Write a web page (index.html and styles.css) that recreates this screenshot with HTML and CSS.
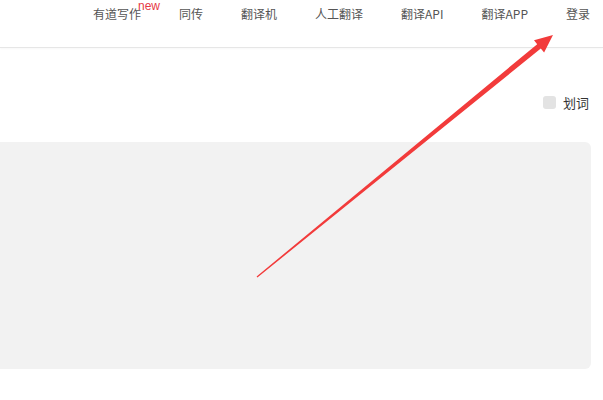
FILE: index.html
```html
<!DOCTYPE html>
<html lang="zh">
<head>
  <meta charset="UTF-8">
  <title>有道翻译</title>
  <link rel="stylesheet" href="styles.css">
</head>
<body>
  <!-- ヘッダー -->
  <div class="top-nav">
    <div class="nav-item">有道写作<span class="nav-new">new</span></div>
    <div class="nav-item">同传</div>
    <div class="nav-item">翻译机</div>
    <div class="nav-item">人工翻译</div>
    <div class="nav-item">翻译API</div>
    <div class="nav-item">翻译APP</div>
    <div class="nav-item">登录</div>
  </div>
  <!-- メイン -->
  <div class="tool-row">
    <label class="select-word">
      <span class="select-box"></span>
      <span>划词</span>
    </label>
  </div>
  <div class="input-panel"></div>

  <svg class="mark-arrow" width="603" height="400" viewBox="0 0 603 400">
    <polygon points="256.6,276.5 537.2,44.2 534,40.2 553,35 544.1,52.6 540.8,48.6 257.4,277.5" fill="#f23b3b"/>
  </svg>
</body>
</html>
```

FILE: styles.css
```css
body {
  margin: 0;
  font-family: "Noto Sans CJK SC", "Noto Sans", sans-serif;
  background: #fff;
  width: 603px;
  height: 400px;
  overflow: hidden;
  position: relative;
}
.top-nav {
  display: flex;
  justify-content: flex-end;
  align-items: flex-start;
  gap: 38px;
  height: 48px;
  padding: 6px 13px 0 0;
  box-sizing: border-box;
  border-bottom: 1px solid #e6e6e6;
  box-shadow: 0 1px 2px rgba(0, 0, 0, 0.03);
}
.nav-item {
  position: relative;
  font-size: 12px;
  line-height: 16px;
  color: #555;
  white-space: nowrap;
}
.nav-new {
  position: absolute;
  left: 45px;
  top: -6px;
  font-family: "Liberation Sans", sans-serif;
  font-size: 12px;
  line-height: 12px;
  color: #e63946;
}
.tool-row {
  display: flex;
  justify-content: flex-end;
  align-items: center;
  height: 20px;
  padding: 44px 14px 0 0;
}
.select-word {
  display: flex;
  align-items: center;
  gap: 7px;
  font-size: 13px;
  color: #333;
}
.select-box {
  width: 13px;
  height: 13px;
  border-radius: 3px;
  background: #e3e3e3;
}
.input-panel {
  margin: 30px 12px 0 0;
  height: 227px;
  background: #f2f2f2;
  border-radius: 0 6px 6px 0;
}
.mark-arrow {
  position: absolute;
  left: 0;
  top: 0;
  pointer-events: none;
}
```
